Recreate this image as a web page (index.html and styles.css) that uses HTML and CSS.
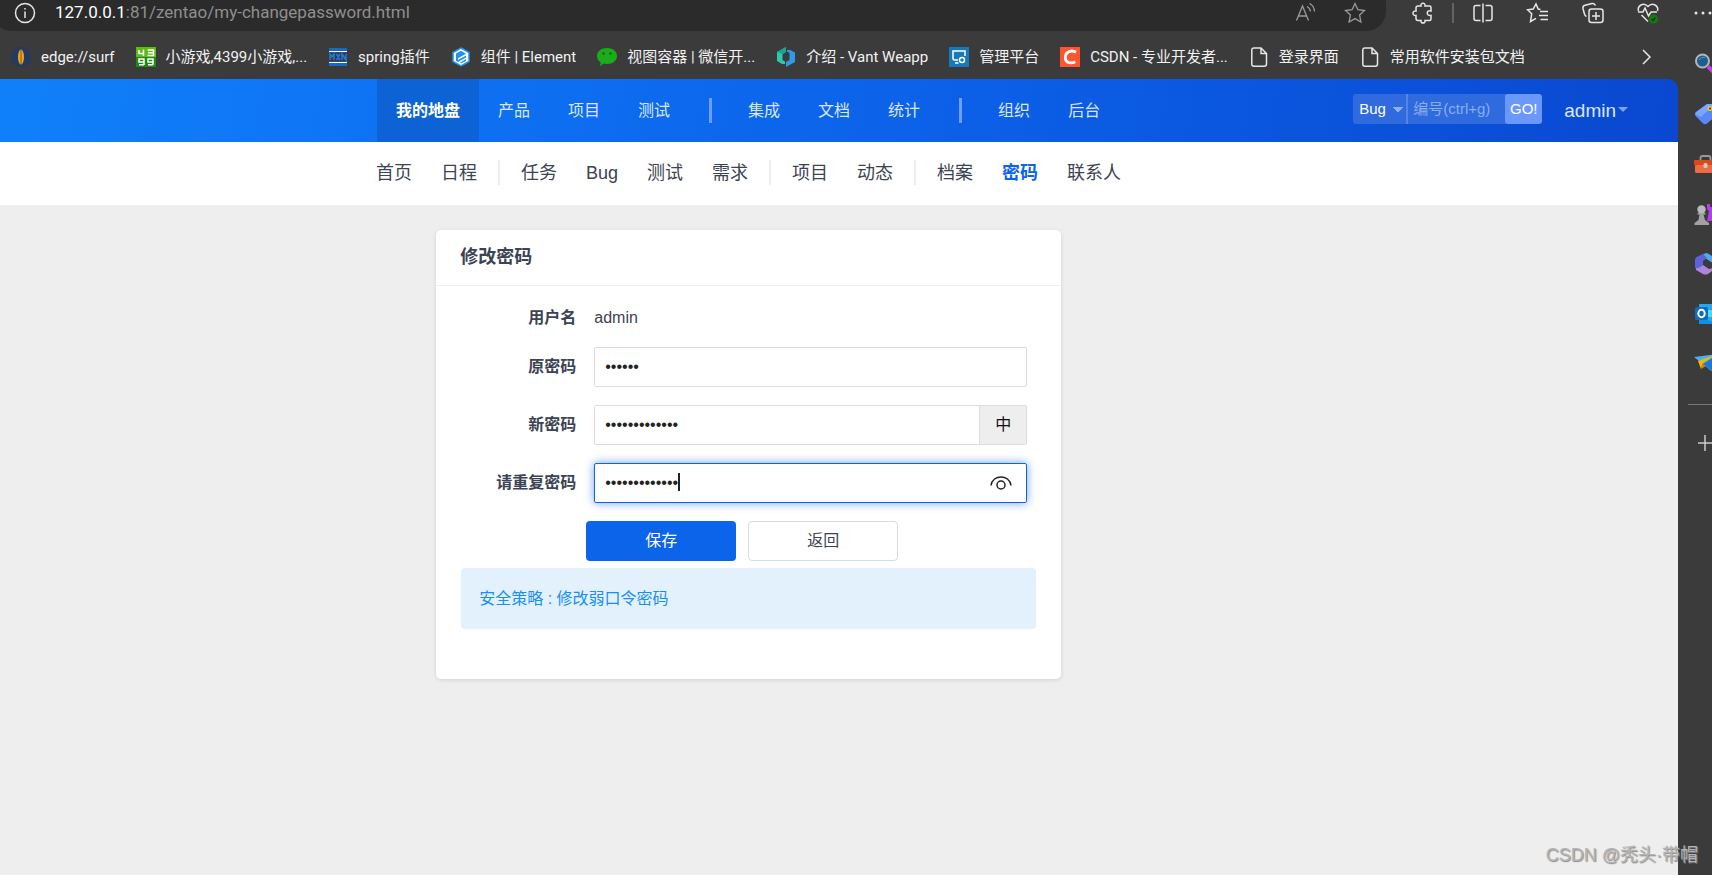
FILE: index.html
```html
<!DOCTYPE html>
<html lang="zh-CN">
<head>
<meta charset="utf-8">
<title>修改密码</title>
<link rel="stylesheet" href="styles.css">
</head>
<body>
<div class="toolbar">
  <div class="address">
    <svg class="i24 info" viewBox="0 0 24 24"><circle cx="12" cy="12" r="9.5"/><path d="M12 10.5v6.5M12 7v1.6"/></svg>
    <div class="url"><b>127.0.0.1</b>:81/zentao/my-changepassword.html</div>
    <svg class="i24 dim" viewBox="0 0 24 24"><path d="M2.500 19.500L8.500 5l6 14.500M4.500 15h8M13 5.500q3 1.500 3.500 5M15.500 2.500q4.500 2 5 8"/></svg>
    <svg class="i24 dim star" viewBox="0 0 24 24"><path d="M12 2.500l2.900 6.200 6.600.8-4.900 4.600 1.300 6.900-5.900-3.400-5.900 3.400 1.300-6.900-4.900-4.600 6.600-.8z"/></svg>
  </div>
  <div class="tools">
    <svg class="i24" viewBox="0 0 24 24"><path d="M7 5h3c-.8-3.800 4.800-3.800 4 0h4.500q1.500 0 1.500 1.500V10c-5-1.500-5 5.500 0 4.500v3.500q0 1.500-1.500 1.500H14c.8 3.300-4.800 3.300-4 0H7Q5 19.500 5 17.500v-3c-4 .8-4-5.300 0-4.500V7Q5 5 7 5z"/></svg>
    <i class="sep"></i>
    <div class="toolset">
      <svg class="i24" viewBox="0 0 24 24"><path d="M9.500 4.500H5Q3 4.500 3 6.500v11q0 2 2 2h4.500M14.500 4.500H19q2 0 2 2v11q0 2-2 2h-4.500M12 2.500v19"/></svg>
      <svg class="i24" viewBox="0 0 24 24"><path d="M14.500 8.500l-2.300-.5L10 3 7.200 8l-5.700.7 4.200 4L4.500 20.500l5.500-3.200M14 10.500h8M13 14.500h9M14.500 18.500H22"/></svg>
      <svg class="i24" viewBox="0 0 24 24"><path d="M5.500 15.500Q4 15 3.300 12.500L2 7.500Q1.500 5 4 4.300l7-1.800q2.500-.5 3.500 2"/><rect x="8" y="8" width="14" height="13.500" rx="2.500"/><path d="M15 11v8M11 15h8"/></svg>
      <svg class="i24" viewBox="0 0 24 24"><path d="M2.500 10C1 5 7.500.5 12 5.500 16.500.5 23 5 21.500 10M2 11h5l2-4 3.500 8 2.500-4h6M5.500 14l6.500 6.500"/><circle class="ok" cx="17.500" cy="18" r="4.500"/><path class="tick" d="M15.500 18l1.500 1.500 2.500-3"/></svg>
      <svg class="i24 more" viewBox="0 0 24 24"><circle cx="5" cy="12" r="1.500"/><circle cx="12" cy="12" r="1.500"/><circle cx="19" cy="12" r="1.500"/></svg>
    </div>
  </div>
</div>

<div class="window">
  <div class="pane">
    <nav class="bookmarks">
      <a href="#"><svg class="fav" viewBox="0 0 20 20"><circle cx="10" cy="10" r="10" fill="#243a63"/><ellipse cx="10" cy="10" rx="3" ry="7.500" fill="#e9a51d"/><path d="M10 3v14" stroke="#8a5a12"/></svg>edge://surf</a>
      <a href="#"><svg class="fav" viewBox="0 0 20 20"><path fill="#5dbb15" d="M0 0h20v20H0z"/><path fill="#208a12" d="M0 10h20v10H0z"/><g fill="none" stroke="#fff" stroke-width="1.500"><path d="M3 3v3.500h5M7.500 2.500v6.500M11.500 3h6v5.500h-6M12 5.700h5M8 18V12H3v3h5M3 17.700h5M17 18V12h-5v3h5M12 17.700h5"/></g></svg>小游戏,4399小游戏,...</a>
      <a href="#"><svg class="fav" viewBox="0 0 20 20"><path fill="#1769c4" d="M1 1h18v18H1z"/><path fill="#3b3b3b" d="M1 5.500h18v9H1z"/><path stroke="#fff" d="M1 4.500h18M1 15.500h18"/><path fill="none" stroke="#1f7ae0" stroke-width="1.500" d="M2 13V7l2 3 2-3v6M8.500 7l3.500 6M12 7l-3.500 6M14 13V7l4 6V7"/></svg>spring插件</a>
      <a href="#"><svg class="fav" viewBox="0 0 20 20"><path fill="#fff" stroke="#2192ec" stroke-width="1.500" d="M10 1l8 4.500v9L10 19l-8-4.500v-9z"/><path fill="#2192ec" d="M10 3.800l5 2.900-8 4.600V13l8-4.500v2L7 15l-2-1.300V6.500zM15 12v2l-5 2.500-1-.8z"/></svg>组件 | Element</a>
      <a href="#"><svg class="fav" viewBox="0 0 20 20"><path fill="#1aad19" d="M10 1c5.600 0 10 3.500 10 8s-4.400 8-10 8q-1.800 0-3.200-.4L3 19l.8-3.500C1.500 14 0 11.800 0 9c0-4.500 4.400-8 10-8z"/><circle cx="6.500" cy="6.500" r="1.200" fill="#235a1e"/><circle cx="13.500" cy="6.500" r="1.200" fill="#235a1e"/></svg>视图容器 | 微信开...</a>
      <a href="#"><svg class="fav" viewBox="0 0 20 20"><path fill="#2cc9ac" d="M1 5l9-5v5L6.500 7v6L9 14.500V17H6l-5-3z"/><path fill="#1aa58b" d="M1 5l9-5v5L6.500 7z"/><path fill="#2d9be9" d="M11 4.500V3h3l5 2.500V15l-9 5v-5l3.500-2V6z"/></svg>介绍 - Vant Weapp</a>
      <a href="#"><svg class="fav" viewBox="0 0 20 20"><path fill="#1779ba" d="M0 0h20v20H0z"/><path fill="none" stroke="#fff" stroke-width="1.500" d="M9 13H5.500Q4 13 4 11.500V4h12v5M6 16h3.500"/><circle cx="13" cy="13" r="2.500" fill="none" stroke="#fff" stroke-width="1.500"/></svg>管理平台</a>
      <a href="#"><svg class="fav" viewBox="0 0 20 20"><path fill="#fc5531" d="M0 0h20v20H0z"/><path fill="none" stroke="#fff" stroke-width="2.800" d="M16 5.300C11.500 2.500 5.500 4.500 5.300 10.500c0 5.500 5.500 6.500 10 4.300"/></svg>CSDN - 专业开发者...</a>
      <a href="#"><svg class="fav page" viewBox="0 0 20 20"><path d="M5 1h7l5.500 5.500V17q0 2.200-2.200 2.200H5Q2.800 19.200 2.800 17V3.200Q2.800 1 5 1zM12 1v5.500h5.500"/></svg>登录界面</a>
      <a href="#"><svg class="fav page" viewBox="0 0 20 20"><path d="M5 1h7l5.500 5.500V17q0 2.200-2.200 2.200H5Q2.800 19.200 2.800 17V3.200Q2.800 1 5 1zM12 1v5.500h5.500"/></svg>常用软件安装包文档</a>
      <button class="chevron" aria-label="更多"><svg class="fav page" viewBox="0 0 20 20"><path d="M6 3l7 7-7 7"/></svg></button>
    </nav>

    <div class="app">
      <header class="header">
        <nav class="mainnav">
          <a class="active" href="#">我的地盘</a><a href="#">产品</a><a href="#">项目</a><a href="#">测试</a><i></i><a href="#">集成</a><a href="#">文档</a><a href="#">统计</a><i></i><a href="#">组织</a><a href="#">后台</a>
        </nav>
        <form class="search">
          <select aria-label="类型"><option>Bug</option></select>
          <input type="text" aria-label="编号" placeholder="编号(ctrl+g)">
          <button type="button">GO!</button>
        </form>
        <button class="user">admin<span class="down"></span></button>
      </header>
      <nav class="subnav">
        <a href="#">首页</a><a href="#">日程</a><i></i><a href="#">任务</a><a href="#">Bug</a><a href="#">测试</a><a href="#">需求</a><i></i><a href="#">项目</a><a href="#">动态</a><i></i><a href="#">档案</a><a class="active" href="#">密码</a><a href="#">联系人</a>
      </nav>
      <main class="main">
        <section class="card">
          <h2>修改密码</h2>
          <form class="form">
            <div class="row name"><span class="label">用户名</span><span class="value">admin</span></div>
            <div class="row"><label class="label" for="old">原密码</label><div class="field"><input id="old" type="password" value="123456"></div></div>
            <div class="row"><label class="label" for="new">新密码</label><div class="field"><input id="new" type="password" value="1234567890123"><span class="strength">中</span></div></div>
            <div class="row"><label class="label" for="again">请重复密码</label><div class="field focused"><input id="again" type="password" value="1234567890123"><span class="cursor"></span><button type="button" class="eye" aria-label="显示密码"><svg viewBox="0 0 22 16"><path d="M1 10.500C2.500-1 19.500-1 21 10.500"/><circle cx="11" cy="10" r="4"/></svg></button></div></div>
            <div class="actions"><button type="button" class="save">保存</button><button type="button" class="back">返回</button></div>
          </form>
          <p class="notice">安全策略 : 修改弱口令密码</p>
        </section>
      </main>
    </div>
  </div>

  <aside class="sidebar">
    <svg viewBox="0 0 24 24"><path stroke="#c63df0" stroke-width="4" d="M14 14.500l8 8"/><circle cx="8.500" cy="9" r="6.500" fill="#1c5f8c" stroke="#b5b5b5" stroke-width="2"/><path d="M5 8q2-3.500 6-2.500" fill="none" stroke="#4f9cc8"/></svg>
    <svg viewBox="0 0 24 24"><path fill="#5b86f7" d="M13 2h8q3 0 3 3v7L13 21.500q-2 1.500-4 0l-7-7q-2-2 0-4z"/><path fill="#7aa6ff" d="M13 2h8L7 15l-5-2q-1.500-1.500 0-3z"/><circle cx="16" cy="6.500" r="2.500" fill="#f6c915"/><circle cx="16" cy="6.500" r="1" fill="#333"/></svg>
    <svg viewBox="0 0 24 24"><path d="M6.500 8V6q0-2 2-2h6q2 0 2 2v2" fill="none" stroke="#999" stroke-width="1.800"/><rect x="1" y="12" width="23" height="9" rx="1.500" fill="#f06a42"/><rect y="8" width="25" height="5" rx="1" fill="#d94a1b"/><rect x="9.500" y="11" width="4" height="5" rx="1.500" fill="#ccc"/></svg>
    <svg viewBox="0 0 24 24"><path fill="#b53df0" d="M13 2h3v3h2V2h3v3h3v14H13l2-10-2-2z"/><circle cx="7.500" cy="7.500" r="4.200" fill="#b9b9b9"/><path fill="#a2a2a2" d="M3.500 11h8v1.500h-2L11 18l4 3v2H.500v-2L4.500 18l1-5.500h-2z"/></svg>
    <svg viewBox="0 0 24 24"><path fill="#54a7f2" d="M9 2l4-1 10 6v9l-4 2v-7l-8-5z"/><path fill="#5b64d6" d="M9 2l4 4-4 3v7l-4 3-3-2q-1-1-1-2V8q0-2 1.500-3z"/><path fill="#b382e0" d="M2 16q3 1 7-3l6 4 8-2-9 7q-3 1-5 0l-7-4z"/></svg>
    <svg viewBox="0 0 24 24"><rect x="5" y="2" width="20" height="20" rx="1" fill="#28a8ea"/><path fill="#50d9ff" d="M14 8h10v7H14z"/><path fill="#1490df" d="M5 15l20 7H5z"/><rect x="1" y="5" width="13" height="13" rx="1.500" fill="#0f6cbd"/><ellipse cx="7.500" cy="11.500" rx="3.200" ry="3.700" fill="none" stroke="#fff" stroke-width="2"/></svg>
    <svg viewBox="0 0 24 24"><path fill="#40b4f5" d="M0 5l24-3-5 16q-1 2-3 0l-6-5z"/><path fill="#f7b500" d="M4 9l20-7-15 9-2 6z"/><path fill="#d98400" d="M7 17l2-6 3 3z"/><path fill="#1f78d8" d="M9 12L24 2l-6 17z"/></svg>
    <hr>
    <svg class="plus" viewBox="0 0 24 24"><path d="M4 12h16M11 4v16"/></svg>
  </aside>
</div>
<div class="watermark">CSDN @秃头·带帽</div>
</body>
</html>
```
FILE: styles.css
```css
* { box-sizing: border-box; }
body {
  margin: 0;
  min-height: 100vh;
  display: flex;
  flex-direction: column;
  overflow: hidden;
  background: #3b3b3b;
  font: 16px/24px "Liberation Sans", "Noto Sans CJK SC", sans-serif;
  color: #3c4353;
}
a { color: inherit; text-decoration: none; }
button, input, select { font: inherit; color: inherit; margin: 0; border: 0; padding: 0; background: none; }
svg { flex: none; }

/* browser toolbar */
.toolbar { display: flex; height: 31px; }
.address {
  flex: 1;
  display: flex;
  align-items: center;
  margin-left: -8px;
  padding: 0 19px 6px 21px;
  border-radius: 0 0 20px 20px;
  background: #2b2b2b;
}
.url { flex: 1; margin-left: 18px; font: 17px/25px Roboto, sans-serif; color: #8f8f8f; white-space: nowrap; }
.url b { font-weight: 400; color: #fff; }
.i24 { width: 24px; height: 24px; fill: none; stroke: #e6e6e6; stroke-width: 1.5; }
.dim { stroke: #9b9b9b; stroke-width: 1.3; }
.star { margin-left: 25px; }
.tools { flex: none; width: 326px; display: flex; align-items: center; padding: 0 0 6px 25px; overflow: hidden; }
.sep { flex: none; width: 2px; height: 20px; margin: 0 17px; background: #636363; }
.toolset { flex: none; display: flex; gap: 31px; }
.more circle { fill: #e6e6e6; stroke: none; }
.i24 .ok { fill: #107c10; stroke: none; }
.i24 .tick { stroke: #2b2b2b; }

.window { flex: 1; display: flex; }
.pane { flex: 1; min-width: 0; display: flex; flex-direction: column; }
.bookmarks {
  height: 48px;
  display: flex;
  align-items: center;
  gap: 21px;
  padding: 4px 21px 0 11px;
  font: 15px/22px Roboto, "Noto Sans CJK SC", sans-serif;
  color: #f2f2f2;
  white-space: nowrap;
}
.bookmarks a { display: flex; align-items: center; gap: 10px; }
.fav { width: 20px; height: 20px; }
.page { fill: none; stroke: #e6e6e6; stroke-width: 1.5; }
.chevron { display: flex; margin-left: auto; }

/* application */
.app { flex: 1; display: flex; flex-direction: column; }
.header {
  height: 63px;
  display: flex;
  align-items: center;
  padding: 0 50px 0 377px;
  border-top-right-radius: 10px;
  background: linear-gradient(100deg, #1080fa, #0c64eb 50%, #0a48d1);
}
.mainnav { flex: 1; display: flex; align-items: center; color: #dbe7fc; white-space: nowrap; }
.mainnav a { padding: 0 19px; line-height: 63px; }
.mainnav .active { background: #0d63d5; color: #fff; font-weight: 700; }
.mainnav i { width: 3px; height: 25px; margin: 0 17px 0 20px; background: #6f9ff2; }
.search { display: flex; height: 30px; margin-bottom: 4px; font-size: 15px; border-radius: 3px; overflow: hidden; background: #2f6bdf; color: #fff; }
.search select {
  width: 53px;
  padding-left: 6px;
  appearance: none;
  background: conic-gradient(from 315deg at 5px 5px, #8fb0f0 90deg, transparent 0) no-repeat 40px 13px / 10px 5px;
}
.search input { width: 99px; padding-left: 5px; border-left: 2px solid #5585e6; }
.search input::placeholder { color: #8badee; opacity: 1; }
.search button { width: 37px; border-radius: 3px; background: #6b98ff; }
.user { display: flex; align-items: center; gap: 2px; margin-left: 22px; font-size: 19px; color: #dbe7fc; }
.down { border: 5px solid transparent; border-top-color: #7da2ec; border-bottom: 0; margin-bottom: 2px; }
.subnav {
  height: 63px;
  display: flex;
  align-items: center;
  padding: 0 0 2px 362px;
  background: #fff;
  font-size: 18px;
  white-space: nowrap;
}
.subnav a { padding: 0 15px 0 14px; }
.subnav i { width: 2px; height: 25px; margin: 0 7px 0 6px; background: #eee; }
.subnav .active { color: #0c64eb; font-weight: 700; }

.main { flex: 1; padding: 25px 0 25px 26%; background: #eee; }
.card { width: 625px; padding-bottom: 50px; border-radius: 5px; background: #fff; box-shadow: 0 1px 4px rgba(0, 0, 0, .12); }
.card h2 { margin: 0; padding: 14px 24px; font-size: 18px; line-height: 27px; border-bottom: 1px solid #eee; }
.form { padding: 20px 34px 0 25px; }
.row { display: flex; align-items: center; gap: 18px; margin-bottom: 18px; }
.label { width: 115px; text-align: right; font-weight: 700; }
.name { margin-bottom: 17px; }
.field { position: relative; flex: 1; height: 40px; display: flex; border: 1px solid #dcdcdc; border-radius: 2px; }
.field input { flex: 1; min-width: 0; padding: 0 10px; color: #222; outline: 0; }
.focused { border-color: #0c64eb; box-shadow: 0 0 10px rgba(12, 100, 235, .6); }
.strength { width: 47px; line-height: 38px; text-align: center; border-left: 1px solid #dcdcdc; background: #eee; color: #111; }
.cursor { position: absolute; left: 83px; top: 9px; width: 2px; height: 18px; background: #222; }
.eye { display: flex; align-items: center; margin-right: 14px; }
.eye svg { width: 22px; height: 16px; fill: none; stroke: #222; stroke-width: 1.5; }
.actions { display: flex; gap: 12px; padding-left: 125px; }
.actions button { width: 150px; height: 40px; border-radius: 4px; }
.actions .save { background: #0c64eb; color: #fff; }
.actions .back { border: 1px solid #d8dbe2; background: #fff; }
.notice { margin: 7px 25px 0; padding: 18px; line-height: 25px; border-radius: 4px; background: #e3f1fd; color: #1890f0; }

/* browser sidebar */
.sidebar { width: 34px; overflow: hidden; display: flex; flex-direction: column; gap: 26px; padding: 21px 0 0 16px; }
.sidebar svg { width: 24px; height: 24px; }
.sidebar hr { width: 24px; height: 1px; margin: 2px 0 0 -6px; border: 0; background: #777; }
.sidebar .plus { stroke: #ccc; stroke-width: 1.5; }

.watermark {
  position: absolute;
  right: 14px;
  bottom: 8px;
  font-size: 18px;
  color: #b4b4b4;
  text-shadow: 1px 1px 1px #888;
}
```
